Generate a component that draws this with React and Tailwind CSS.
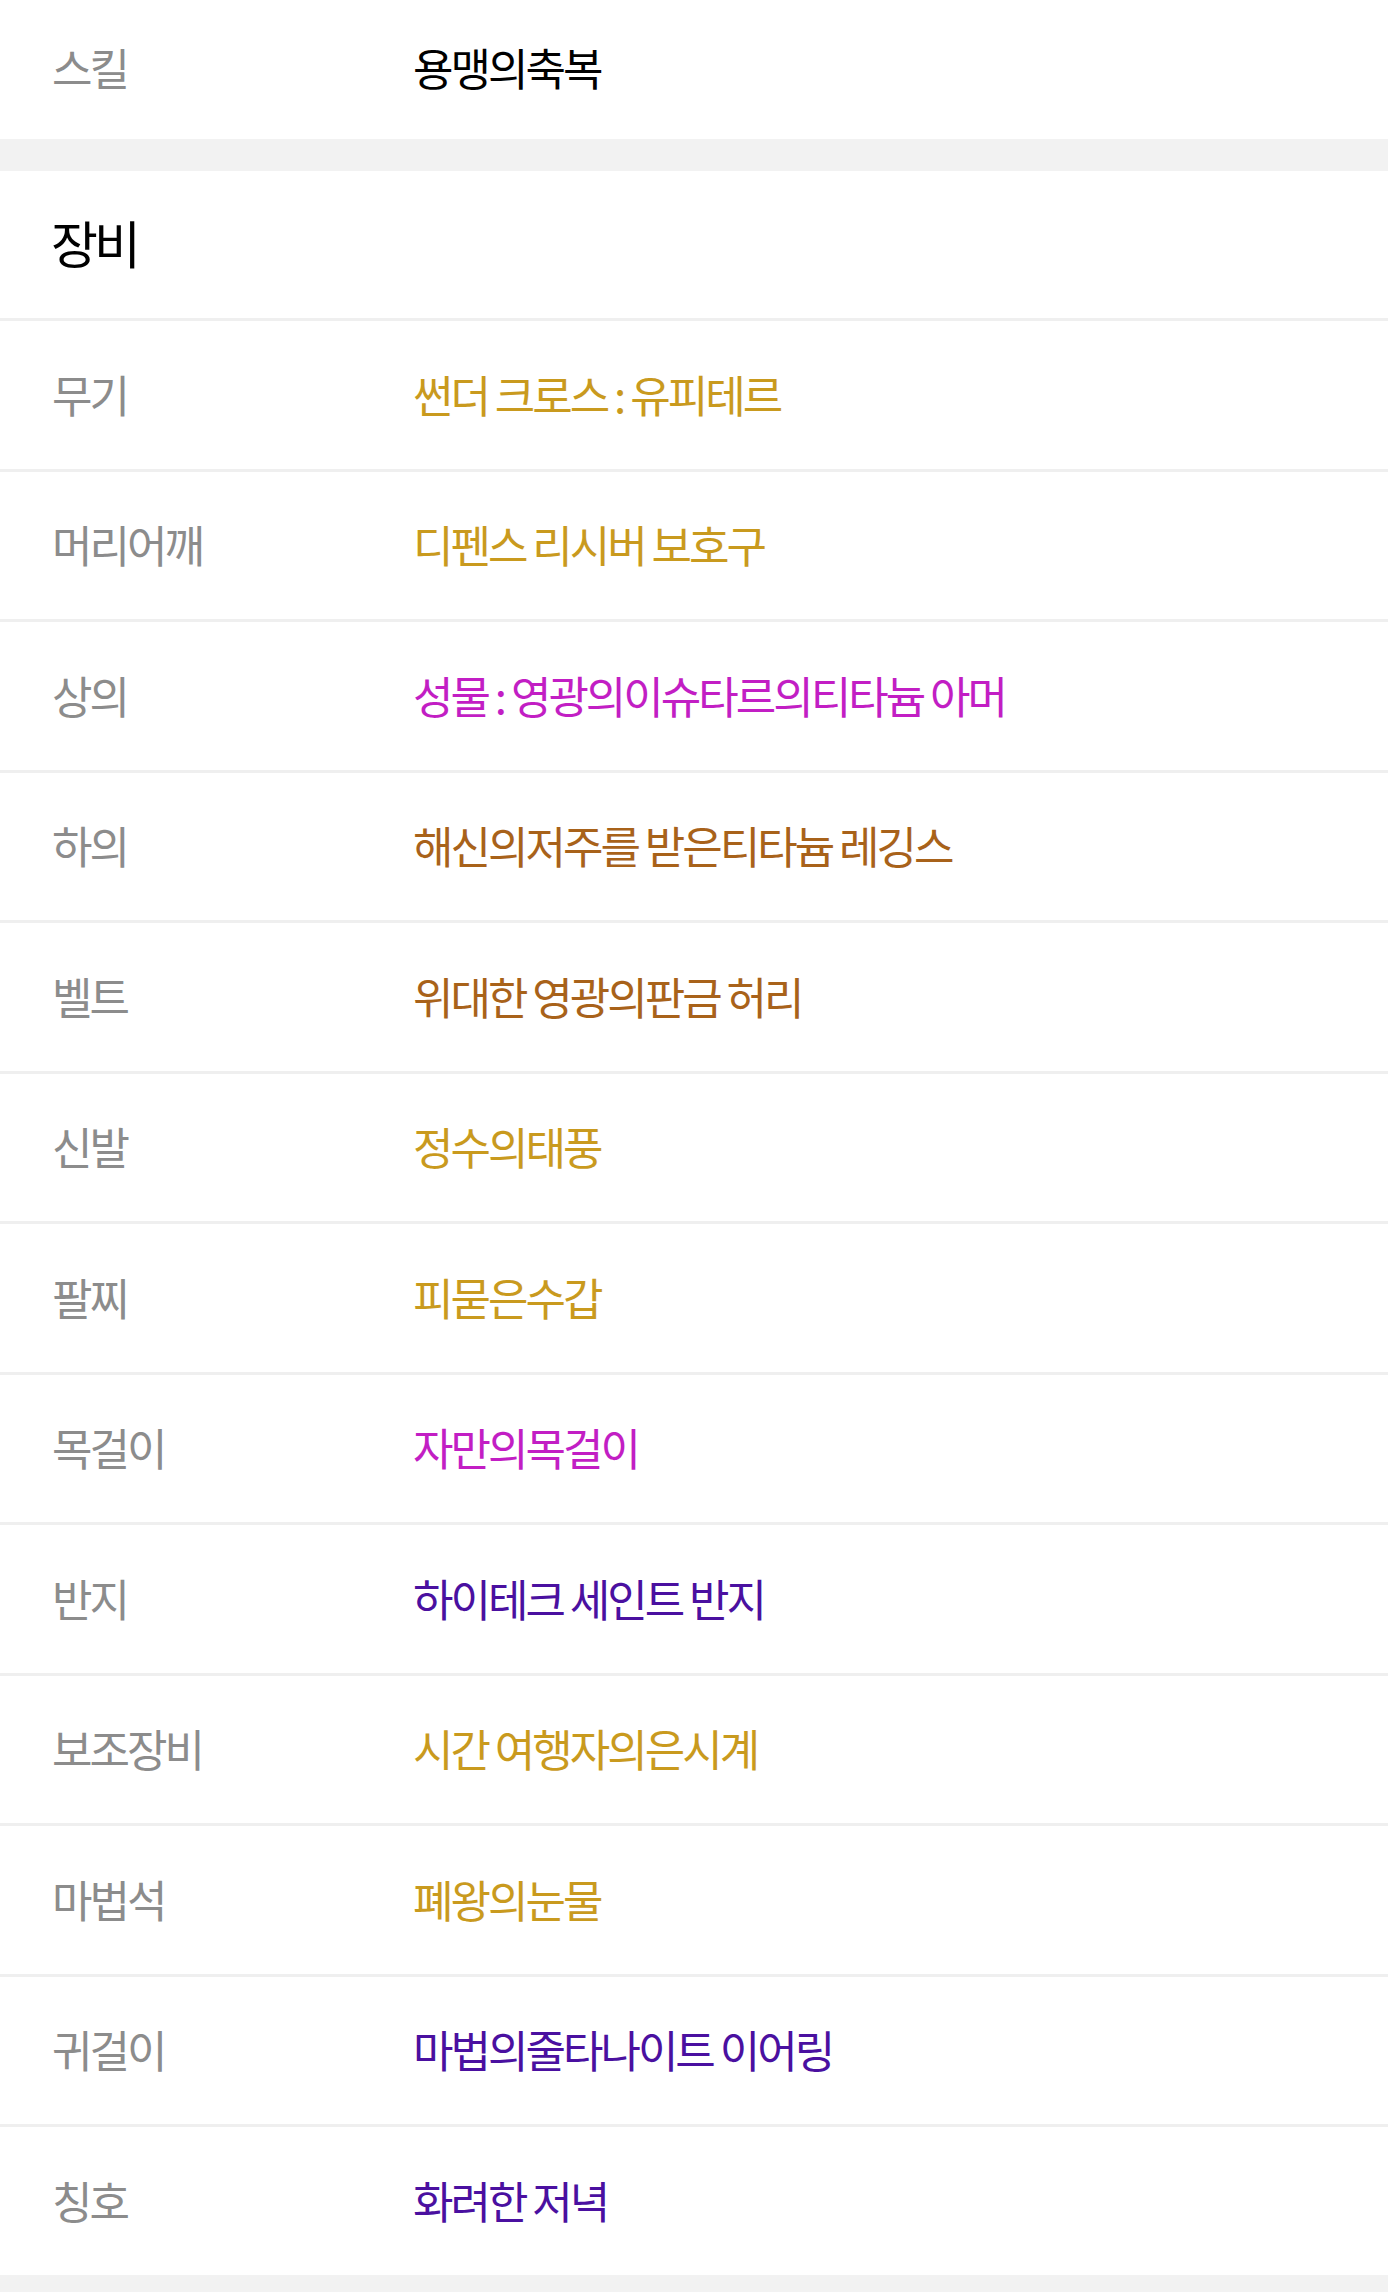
import React from 'react'

const equipment = [
  { slot: '무기', name: '썬더 크로스 : 유피테르', color: 'text-[#c99a1e]' },
  { slot: '머리어깨', name: '디펜스 리시버 보호구', color: 'text-[#c99a1e]' },
  { slot: '상의', name: '성물 : 영광의이슈타르의티타늄 아머', color: 'text-[#c21ec4]' },
  { slot: '하의', name: '해신의저주를 받은티타늄 레깅스', color: 'text-[#a8621a]' },
  { slot: '벨트', name: '위대한 영광의판금 허리', color: 'text-[#a8621a]' },
  { slot: '신발', name: '정수의태풍', color: 'text-[#c99a1e]' },
  { slot: '팔찌', name: '피묻은수갑', color: 'text-[#c99a1e]' },
  { slot: '목걸이', name: '자만의목걸이', color: 'text-[#c21ec4]' },
  { slot: '반지', name: '하이테크 세인트 반지', color: 'text-[#4a10a0]' },
  { slot: '보조장비', name: '시간 여행자의은시계', color: 'text-[#c99a1e]' },
  { slot: '마법석', name: '폐왕의눈물', color: 'text-[#c99a1e]' },
  { slot: '귀걸이', name: '마법의줄타나이트 이어링', color: 'text-[#4a10a0]' },
  { slot: '칭호', name: '화려한 저녁', color: 'text-[#4a10a0]' },
]

const font = "font-['Noto_Sans_CJK_KR','Noto_Sans',sans-serif]"

export default function App() {
  return (
    <div className={`w-[1388px] min-h-[2292px] bg-[#f2f2f2] ${font}`}>
      <div className="flex h-[139px] items-center bg-white px-[52px] pb-[5px] text-[44px] tracking-[-3px]">
        <span className="w-[361px] text-[#8c8c8c]">스킬</span>
        <span className="text-black">용맹의축복</span>
      </div>

      <div className="h-[32px]" />

      <div className="flex h-[147px] items-center bg-white px-[51px] pb-[5px] text-[51px] tracking-[-4px] text-black">
        장비
      </div>

      {equipment.map((item) => (
        <div
          key={item.slot}
          className="flex h-[150.5px] items-center border-t-[3px] border-[#efefef] bg-white px-[52px] pb-[2px] text-[44px] tracking-[-3px]"
        >
          <span className="w-[361px] text-[#8c8c8c]">{item.slot}</span>
          <span className={item.color}>{item.name}</span>
        </div>
      ))}
    </div>
  )
}
